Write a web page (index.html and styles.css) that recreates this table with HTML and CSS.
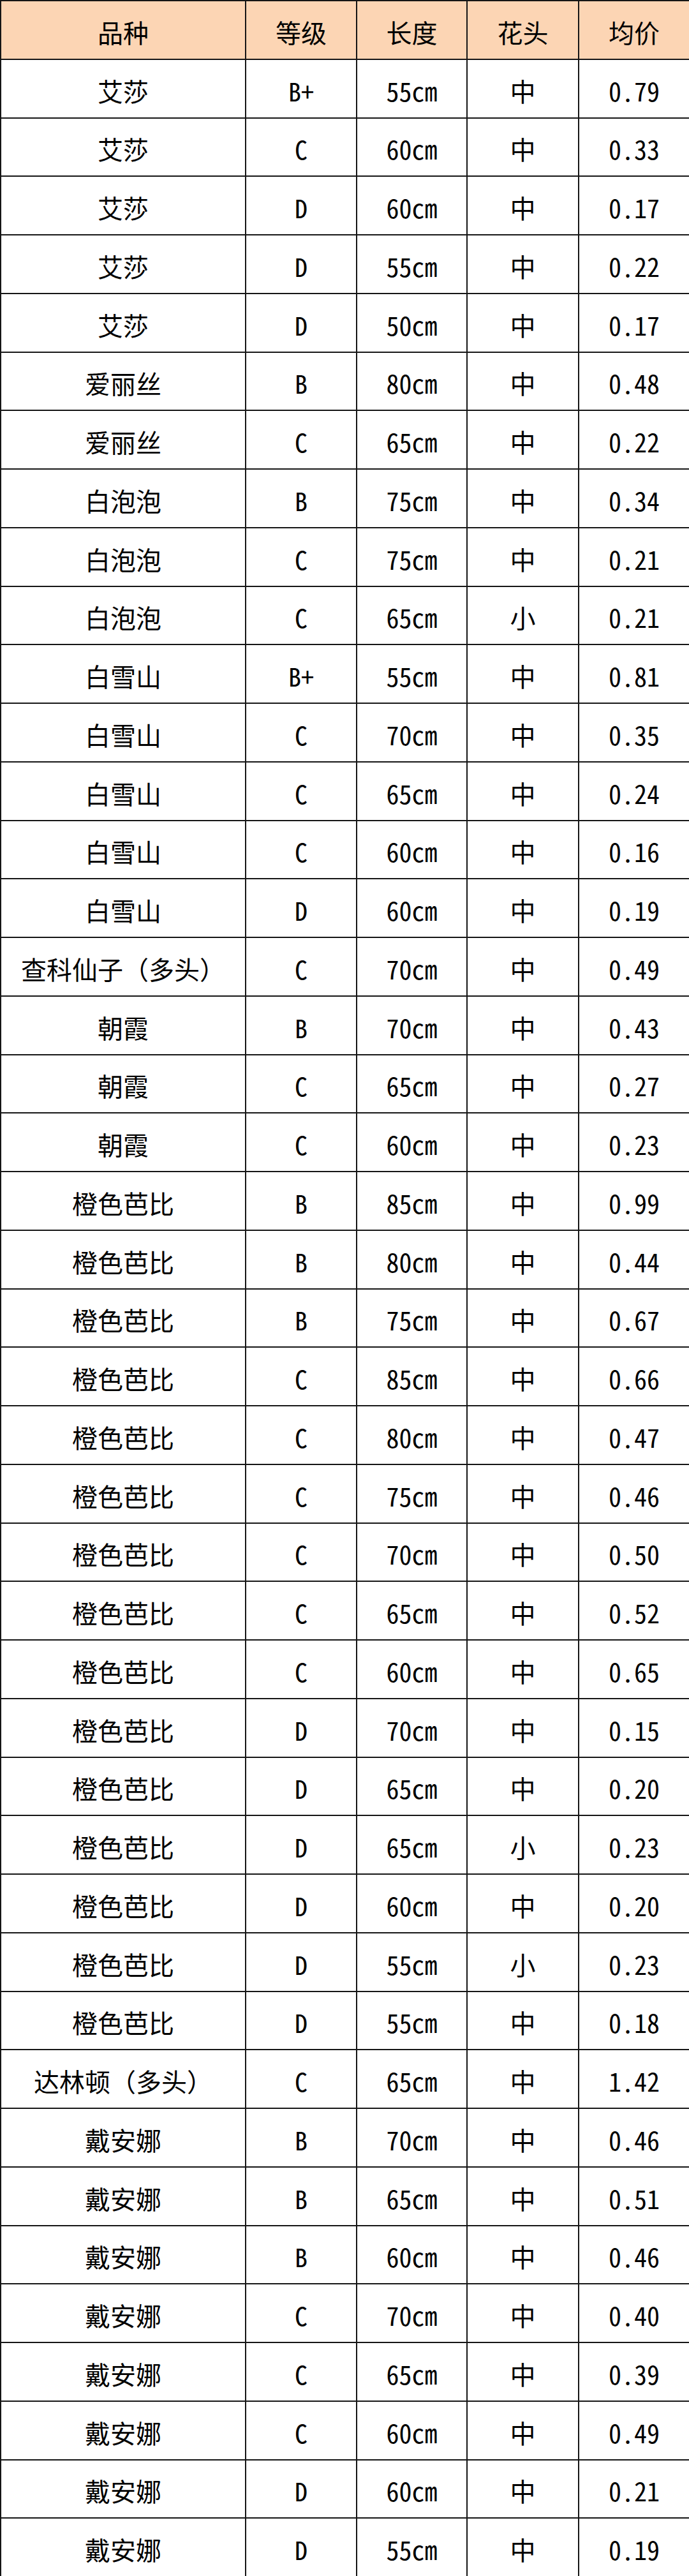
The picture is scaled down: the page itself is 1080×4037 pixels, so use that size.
FILE: index.html
```html
<!DOCTYPE html>
<html lang="zh-CN">
<head>
<meta charset="utf-8">
<title>品种均价表</title>
<link rel="stylesheet" href="styles.css">
</head>
<body>
<table class="price-table">
<colgroup>
<col class="c1"><col class="c2"><col class="c3"><col class="c4"><col class="c5">
</colgroup>
<thead>
<tr><th>品种</th><th>等级</th><th>长度</th><th>花头</th><th>均价</th></tr>
</thead>
<tbody>
<tr><td>艾莎</td><td>B+</td><td>55cm</td><td>中</td><td>0.79</td></tr>
<tr><td>艾莎</td><td>C</td><td>60cm</td><td>中</td><td>0.33</td></tr>
<tr><td>艾莎</td><td>D</td><td>60cm</td><td>中</td><td>0.17</td></tr>
<tr><td>艾莎</td><td>D</td><td>55cm</td><td>中</td><td>0.22</td></tr>
<tr><td>艾莎</td><td>D</td><td>50cm</td><td>中</td><td>0.17</td></tr>
<tr><td>爱丽丝</td><td>B</td><td>80cm</td><td>中</td><td>0.48</td></tr>
<tr><td>爱丽丝</td><td>C</td><td>65cm</td><td>中</td><td>0.22</td></tr>
<tr><td>白泡泡</td><td>B</td><td>75cm</td><td>中</td><td>0.34</td></tr>
<tr><td>白泡泡</td><td>C</td><td>75cm</td><td>中</td><td>0.21</td></tr>
<tr><td>白泡泡</td><td>C</td><td>65cm</td><td>小</td><td>0.21</td></tr>
<tr><td>白雪山</td><td>B+</td><td>55cm</td><td>中</td><td>0.81</td></tr>
<tr><td>白雪山</td><td>C</td><td>70cm</td><td>中</td><td>0.35</td></tr>
<tr><td>白雪山</td><td>C</td><td>65cm</td><td>中</td><td>0.24</td></tr>
<tr><td>白雪山</td><td>C</td><td>60cm</td><td>中</td><td>0.16</td></tr>
<tr><td>白雪山</td><td>D</td><td>60cm</td><td>中</td><td>0.19</td></tr>
<tr><td>查科仙子（多头）</td><td>C</td><td>70cm</td><td>中</td><td>0.49</td></tr>
<tr><td>朝霞</td><td>B</td><td>70cm</td><td>中</td><td>0.43</td></tr>
<tr><td>朝霞</td><td>C</td><td>65cm</td><td>中</td><td>0.27</td></tr>
<tr><td>朝霞</td><td>C</td><td>60cm</td><td>中</td><td>0.23</td></tr>
<tr><td>橙色芭比</td><td>B</td><td>85cm</td><td>中</td><td>0.99</td></tr>
<tr><td>橙色芭比</td><td>B</td><td>80cm</td><td>中</td><td>0.44</td></tr>
<tr><td>橙色芭比</td><td>B</td><td>75cm</td><td>中</td><td>0.67</td></tr>
<tr><td>橙色芭比</td><td>C</td><td>85cm</td><td>中</td><td>0.66</td></tr>
<tr><td>橙色芭比</td><td>C</td><td>80cm</td><td>中</td><td>0.47</td></tr>
<tr><td>橙色芭比</td><td>C</td><td>75cm</td><td>中</td><td>0.46</td></tr>
<tr><td>橙色芭比</td><td>C</td><td>70cm</td><td>中</td><td>0.50</td></tr>
<tr><td>橙色芭比</td><td>C</td><td>65cm</td><td>中</td><td>0.52</td></tr>
<tr><td>橙色芭比</td><td>C</td><td>60cm</td><td>中</td><td>0.65</td></tr>
<tr><td>橙色芭比</td><td>D</td><td>70cm</td><td>中</td><td>0.15</td></tr>
<tr><td>橙色芭比</td><td>D</td><td>65cm</td><td>中</td><td>0.20</td></tr>
<tr><td>橙色芭比</td><td>D</td><td>65cm</td><td>小</td><td>0.23</td></tr>
<tr><td>橙色芭比</td><td>D</td><td>60cm</td><td>中</td><td>0.20</td></tr>
<tr><td>橙色芭比</td><td>D</td><td>55cm</td><td>小</td><td>0.23</td></tr>
<tr><td>橙色芭比</td><td>D</td><td>55cm</td><td>中</td><td>0.18</td></tr>
<tr><td>达林顿（多头）</td><td>C</td><td>65cm</td><td>中</td><td>1.42</td></tr>
<tr><td>戴安娜</td><td>B</td><td>70cm</td><td>中</td><td>0.46</td></tr>
<tr><td>戴安娜</td><td>B</td><td>65cm</td><td>中</td><td>0.51</td></tr>
<tr><td>戴安娜</td><td>B</td><td>60cm</td><td>中</td><td>0.46</td></tr>
<tr><td>戴安娜</td><td>C</td><td>70cm</td><td>中</td><td>0.40</td></tr>
<tr><td>戴安娜</td><td>C</td><td>65cm</td><td>中</td><td>0.39</td></tr>
<tr><td>戴安娜</td><td>C</td><td>60cm</td><td>中</td><td>0.49</td></tr>
<tr><td>戴安娜</td><td>D</td><td>60cm</td><td>中</td><td>0.21</td></tr>
<tr><td>戴安娜</td><td>D</td><td>55cm</td><td>中</td><td>0.19</td></tr>
</tbody>
</table>
</body>
</html>
```
FILE: styles.css
```css
html, body {
  margin: 0;
  padding: 0;
  background: #ffffff;
}

.price-table {
  width: 1080px;
  height: 4037px;
  border-collapse: collapse;
  table-layout: fixed;
  font-family: "Noto Sans Mono CJK SC", "Noto Sans CJK SC", "DejaVu Sans Mono", monospace;
  font-size: 40px;
  color: #000000;
}

.c1 { width: 384px; }
.c2 { width: 174px; }
.c3 { width: 173px; }
.c4 { width: 175px; }
.c5 { width: 174px; }

.price-table th,
.price-table td {
  border: 2px solid #151515;
  text-align: center;
  vertical-align: middle;
  padding: 6px 0 0 0;
  font-weight: normal;
  line-height: 1;
  white-space: nowrap;
}

.price-table tr {
  height: 91.75px;
}

.price-table thead th {
  background: #fcd5b4;
}
```
